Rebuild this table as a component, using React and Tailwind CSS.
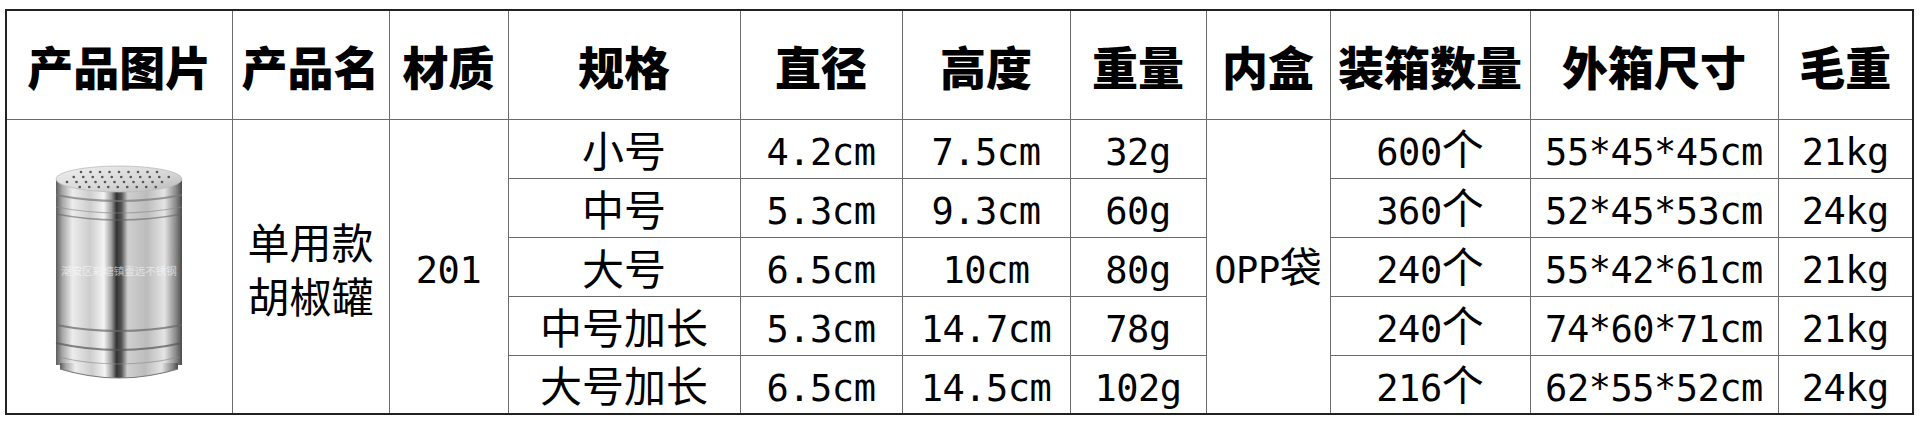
import React from "react";

const rows = [
  ["小号", "4.2cm", "7.5cm", "32g", "600个", "55*45*45cm", "21kg"],
  ["中号", "5.3cm", "9.3cm", "60g", "360个", "52*45*53cm", "24kg"],
  ["大号", "6.5cm", "10cm", "80g", "240个", "55*42*61cm", "21kg"],
  ["中号加长", "5.3cm", "14.7cm", "78g", "240个", "74*60*71cm", "21kg"],
  ["大号加长", "6.5cm", "14.5cm", "102g", "216个", "62*55*52cm", "24kg"],
];

const headers = ["产品图片", "产品名", "材质", "规格", "直径", "高度", "重量", "内盒", "装箱数量", "外箱尺寸", "毛重"];
const widths = [226, 157, 119, 232, 162, 168, 136, 124, 200, 248, 135];

function Mixed({ text }) {
  const parts = text.match(/[\x00-\x7F]+|[^\x00-\x7F]+/g) || [];
  return (
    <>
      {parts.map((p, i) =>
        /^[\x00-\x7F]+$/.test(p) ? (
          <span key={i} className="font-['DejaVu_Sans_Mono',monospace] text-[37px] tracking-[-0.5px]">
            {p}
          </span>
        ) : (
          <span key={i}>{p}</span>
        )
      )}
    </>
  );
}

function Shaker() {
  const holes = [];
  const rowsY = [7, 12, 17, 22];
  rowsY.forEach((y, ri) => {
    const half = [38, 50, 52, 44][ri];
    const step = 9.5;
    const off = ri % 2 ? step / 2 : 0;
    for (let x = 65 - half + off; x <= 65 + half; x += step) {
      holes.push(<circle key={`${ri}-${x}`} cx={x} cy={y} r="1.3" fill="#555" />);
    }
  });
  return (
    <svg width="130" height="218" viewBox="0 0 130 218">
      <defs>
        <linearGradient id="body" x1="0" x2="1" y1="0" y2="0">
          <stop offset="0" stopColor="#5c5c5c" />
          <stop offset="0.05" stopColor="#a6a6a6" />
          <stop offset="0.13" stopColor="#ececec" />
          <stop offset="0.27" stopColor="#cdcdcd" />
          <stop offset="0.38" stopColor="#f4f4f4" />
          <stop offset="0.44" stopColor="#9c9c9c" />
          <stop offset="0.48" stopColor="#333" />
          <stop offset="0.52" stopColor="#555" />
          <stop offset="0.57" stopColor="#cfcfcf" />
          <stop offset="0.72" stopColor="#bcbcbc" />
          <stop offset="0.86" stopColor="#e4e4e4" />
          <stop offset="0.95" stopColor="#8a8a8a" />
          <stop offset="1" stopColor="#4a4a4a" />
        </linearGradient>
        <linearGradient id="lid" x1="0" x2="1" y1="0" y2="1">
          <stop offset="0" stopColor="#f0f0f0" />
          <stop offset="0.6" stopColor="#d6d6d6" />
          <stop offset="1" stopColor="#b8b8b8" />
        </linearGradient>
      </defs>
      <rect x="2" y="14" width="126" height="186" fill="url(#body)" />
      <path d="M6 198 L6 204 Q65 222 124 204 L124 198 Z" fill="url(#body)" />
      <path d="M6 204 Q65 222 124 204" stroke="#7a7a7a" strokeWidth="1.2" fill="none" />
      <ellipse cx="65" cy="14" rx="63" ry="13" fill="url(#lid)" stroke="#bbb" strokeWidth="0.8" />
      {holes}
      <path d="M2 30 Q65 42 128 30" stroke="#777" strokeWidth="2" fill="none" opacity="0.7" />
      <path d="M2 42 Q65 54 128 42" stroke="#888" strokeWidth="1.2" fill="none" opacity="0.6" />
      <path d="M2 49 Q65 61 128 49" stroke="#666" strokeWidth="1.5" fill="none" opacity="0.6" />
      <path d="M2 160 Q65 172 128 160" stroke="#666" strokeWidth="2" fill="none" opacity="0.7" />
      <path d="M2 178 Q65 192 128 178" stroke="#555" strokeWidth="2" fill="none" opacity="0.7" />
      <path d="M4 192 Q65 206 126 192" stroke="#888" strokeWidth="1.2" fill="none" opacity="0.6" />
      <text
        x="65"
        y="110"
        textAnchor="middle"
        fontSize="10.5"
        fill="#ffffff"
        opacity="0.55"
        fontFamily="Noto Sans CJK SC, sans-serif"
      >
        潮安区彩塘镇壹远不锈钢
      </text>
    </svg>
  );
}

export default function App() {
  const cell = "border border-[#6b6b6b] p-0 text-center align-middle";
  return (
    <div className="w-[1920px] h-[427px] bg-white pt-[9px] pl-[5px] font-['Noto_Sans_CJK_SC',sans-serif] text-black">
      <table className="table-fixed border-collapse border-2 border-[#222] w-[1907px]">
        <colgroup>
          {widths.map((w, i) => (
            <col key={i} style={{ width: w }} />
          ))}
        </colgroup>
        <thead>
          <tr className="h-[109px]">
            {headers.map((h) => (
              <th key={h} className={`${cell} text-[46px] font-black leading-none whitespace-nowrap`}>
                {h}
              </th>
            ))}
          </tr>
        </thead>
        <tbody className="text-[42px] font-normal leading-none">
          {rows.map((r, i) => (
            <tr key={i} className="h-[59px]">
              {i === 0 && (
                <>
                  <td rowSpan={5} className={cell}>
                    <div className="flex justify-center pt-[16px]">
                      <Shaker />
                    </div>
                  </td>
                  <td rowSpan={5} className={cell}>
                    <div className="flex flex-col items-center gap-[12px] pt-[4px]">
                      <div>单用款</div>
                      <div>胡椒罐</div>
                    </div>
                  </td>
                  <td rowSpan={5} className={cell}>
                    <Mixed text="201" />
                  </td>
                </>
              )}
              {r.slice(0, 4).map((v, j) => (
                <td key={j} className={`${cell} whitespace-nowrap`}>
                  <Mixed text={v} />
                </td>
              ))}
              {i === 0 && (
                <td rowSpan={5} className={`${cell} whitespace-nowrap`}>
                  <Mixed text="OPP袋" />
                </td>
              )}
              {r.slice(4).map((v, j) => (
                <td key={j + 4} className={`${cell} whitespace-nowrap`}>
                  <Mixed text={v} />
                </td>
              ))}
            </tr>
          ))}
        </tbody>
      </table>
    </div>
  );
}
